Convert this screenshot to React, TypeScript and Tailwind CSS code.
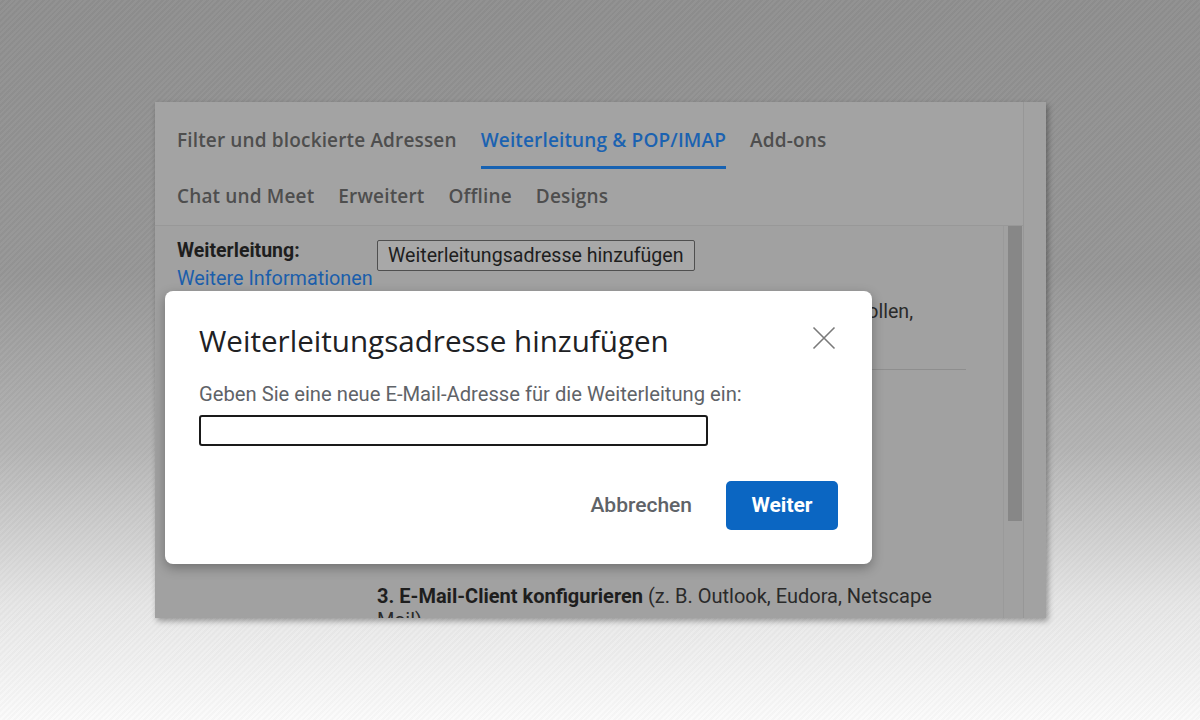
import React from "react";

const gs = "font-['Open_Sans','Noto_Sans',sans-serif]";
const rb = "font-['Roboto','Liberation_Sans',sans-serif]";

function Tab({ label, active }: { label: string; active?: boolean }) {
  return (
    <div className="flex flex-col px-[12px]">
      <div
        className={`pt-[10px] pb-[14px] leading-[24px] text-[19px] font-semibold tracking-[0.15px] whitespace-nowrap ${gs} ${
          active ? "text-[#1b62b1]" : "text-[#4e4e4e]"
        }`}
      >
        {label}
      </div>
      <div className={`h-[3px] ${active ? "bg-[#1762b2]" : "bg-transparent"}`} />
    </div>
  );
}

function Tab2({ label }: { label: string }) {
  return (
    <div
      className={`px-[12px] leading-[24px] text-[19px] font-semibold tracking-[0.15px] whitespace-nowrap text-[#4e4e4e] ${gs}`}
    >
      {label}
    </div>
  );
}

export default function App() {
  return (
    <div className="w-[1200px] h-[720px] overflow-hidden pt-[102px] pl-[155px] bg-[repeating-linear-gradient(135deg,rgba(255,255,255,0.03)_0px,rgba(255,255,255,0.03)_2px,rgba(0,0,0,0.02)_2px,rgba(0,0,0,0.02)_4px),linear-gradient(180deg,#8f8f8f_0%,#969696_38%,#b3b3b3_62%,#e6e6e6_84%,#fbfbfb_100%)]">
      <div className="relative w-[891px] h-[516px] bg-[#a3a3a3] shadow-[2px_3px_6px_rgba(0,0,0,0.35)] flex overflow-hidden">
        <div className="w-[868px] flex flex-col">
          {/* tabs */}
          <div className="h-[123px] shrink-0 pl-[10px] pt-[16px] flex flex-col">
            <div className="flex">
              <Tab label="Filter und blockierte Adressen" />
              <Tab label="Weiterleitung & POP/IMAP" active />
              <Tab label="Add-ons" />
            </div>
            <div className="flex mt-[15px]">
              <Tab2 label="Chat und Meet" />
              <Tab2 label="Erweitert" />
              <Tab2 label="Offline" />
              <Tab2 label="Designs" />
            </div>
          </div>
          {/* content */}
          <div className="flex flex-1 min-h-0 border-t border-[#989898] bg-[#a1a1a1]">
            <div className={`flex-1 pl-[22px] pt-[14px] flex overflow-hidden ${rb}`}>
              <div className="w-[200px] shrink-0 flex flex-col">
                <div className="leading-[22px] text-[19.5px] font-bold text-[#1e1e1e]">Weiterleitung:</div>
                <div className="mt-[6px] leading-[22px] text-[19.8px] text-[#1b5eab] whitespace-nowrap">
                  Weitere Informationen
                </div>
              </div>
              <div className="w-[589px] shrink-0 flex flex-col">
                <div className="flex shrink-0">
                  <div className="h-[31px] px-[10px] flex items-center border border-[#4f4f4f] rounded-[2px] bg-[#a8a8a8] text-[19.6px] text-[#1e1e1e] whitespace-nowrap">
                    Weiterleitungsadresse hinzufügen
                  </div>
                </div>
                <div className="shrink-0 mt-[30px] w-[536px] h-[22px] overflow-hidden whitespace-nowrap text-right leading-[22px] text-[19.6px] text-[#2a2a2a]">
                  Wenn Sie nur bestimmte Nachrichten weiterleiten wollen,
                </div>
                <div className="shrink-0 mt-[46px] h-px bg-[#8e8e8e]" />
                <div className="shrink-0 mt-[214px] leading-[24px] text-[20px] text-[#2a2a2a] whitespace-nowrap">
                  <span className="font-bold text-[#1e1e1e]">3. E-Mail-Client konfigurieren</span> (z. B. Outlook,
                  Eudora, Netscape
                </div>
                <div className="shrink-0 leading-[24px] text-[20px] text-[#2a2a2a]">Mail)</div>
              </div>
            </div>
            <div className="w-[20px] shrink-0 pl-[4px] pr-[1px] border-l border-[#9a9a9a]">
              <div className="h-[295px] bg-[#878787]" />
            </div>
          </div>
        </div>
        <div className="w-[23px] border-l border-[#979797] bg-[#a2a2a2]" />

        {/* dialog */}
        <div className="absolute left-[10px] top-[189px] w-[707px] h-[273px] bg-white rounded-[8px] shadow-[0_4px_12px_rgba(0,0,0,0.3)] pl-[34px] flex flex-col">
          <div className="flex items-start justify-between pt-[32px] pr-[36px]">
            <div className={`leading-[36px] text-[29.6px] text-[#202124] whitespace-nowrap ${gs}`}>
              Weiterleitungsadresse hinzufügen
            </div>
            <svg width="24" height="24" viewBox="0 0 24 24" className="mt-[3px]">
              <path d="M1.5 1.5L22.5 22.5M22.5 1.5L1.5 22.5" stroke="#7a7a7a" strokeWidth="1.6" fill="none" />
            </svg>
          </div>
          <div className={`mt-[25px] leading-[20px] text-[20.2px] text-[#5f6368] whitespace-nowrap ${rb}`}>
            Geben Sie eine neue E-Mail-Adresse für die Weiterleitung ein:
          </div>
          <div className="mt-[11px] w-[509px] h-[31px] border-2 border-[#1a1a1a] rounded-[3px]" />
          <div className={`mt-[35px] pr-[34px] flex justify-end items-center ${rb}`}>
            <div className="mr-[34px] text-[21px] font-medium text-[#5f6368]">Abbrechen</div>
            <div className="w-[112px] h-[49px] rounded-[5px] bg-[#0b66c2] flex items-center justify-center text-[21px] font-bold text-white">
              Weiter
            </div>
          </div>
        </div>
      </div>
    </div>
  );
}
